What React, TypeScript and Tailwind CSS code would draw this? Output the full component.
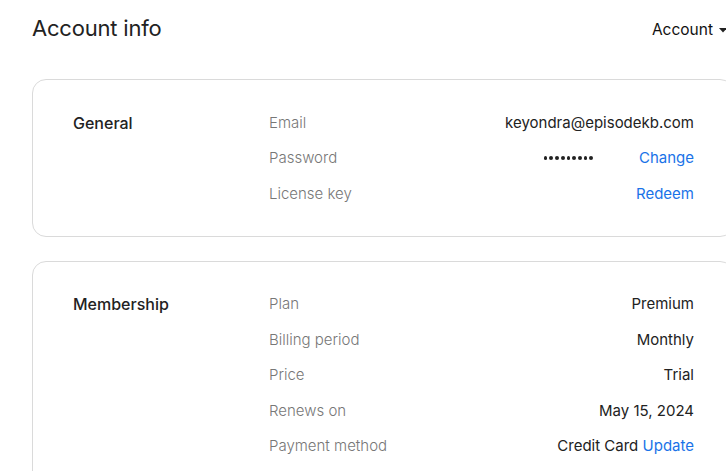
import { ReactNode } from 'react';

type Row = { label: string; value: ReactNode };

const linkCls = 'text-[#1a73e8] cursor-pointer hover:underline';

function Section({ title, rows }: { title: string; rows: Row[] }) {
    return (
        <div className="rounded-[14px] border border-[#dadada] bg-white pl-10 pr-[39px] pt-[25px] pb-[24px] flex">
            <div className="w-[196px] shrink-0 h-[35.5px] flex items-center text-[16px] font-medium text-[#222]">{title}</div>
            <div className="flex-1 flex flex-col">
                {rows.map((r) => (
                    <div key={r.label} className="flex items-center justify-between h-[35.5px] text-[15px]">
                        <span className="text-[#777] font-light">{r.label}</span>
                        <span className="text-[#222]">{r.value}</span>
                    </div>
                ))}
            </div>
        </div>
    );
}

// masked password, nine dots
function Dots() {
    return (
        <span className="flex items-center gap-[2px]" aria-label="password hidden">
            {Array.from({ length: 9 }).map((_, i) => (
                <span key={i} className="w-[3.7px] h-[3.7px] rounded-full bg-[#222]" />
            ))}
        </span>
    );
}

export default function App() {
    const general: Row[] = [
        { label: 'Email', value: 'keyondra@episodekb.com' },
        {
            label: 'Password',
            value: (
                <span className="flex items-center gap-[46px]">
                    <Dots />
                    <span className={linkCls}>Change</span>
                </span>
            ),
        },
        { label: 'License key', value: <span className={linkCls}>Redeem</span> },
    ];

    const membership: Row[] = [
        { label: 'Plan', value: 'Premium' },
        { label: 'Billing period', value: 'Monthly' },
        { label: 'Price', value: 'Trial' },
        { label: 'Renews on', value: 'May 15, 2024' },
        {
            label: 'Payment method',
            value: (
                <span>
                    Credit Card <span className={linkCls}>Update</span>
                </span>
            ),
        },
    ];

    return (
        <div className="w-full min-h-screen overflow-hidden bg-white" style={{ fontFamily: 'Inter, "Noto Sans", sans-serif' }}>
            <div className="w-[766px] px-8">
                <div className="flex items-center justify-between h-[56px] pt-[1px]">
                    <h1 className="text-[22px] font-normal text-[#222] tracking-[-0.2px]">Account info</h1>
                    <button className="flex items-center gap-[6px] text-[15.5px] text-[#111] pt-[3px] pr-[7px]">
                        Account
                        <svg width="8" height="5" viewBox="0 0 8 5">
                            <path d="M0 0h8L4 4.5z" fill="#222" />
                        </svg>
                    </button>
                </div>
                <div className="mt-[23px] flex flex-col gap-[24px]">
                    <Section title="General" rows={general} />
                    <Section title="Membership" rows={membership} />
                </div>
            </div>
        </div>
    );
}
